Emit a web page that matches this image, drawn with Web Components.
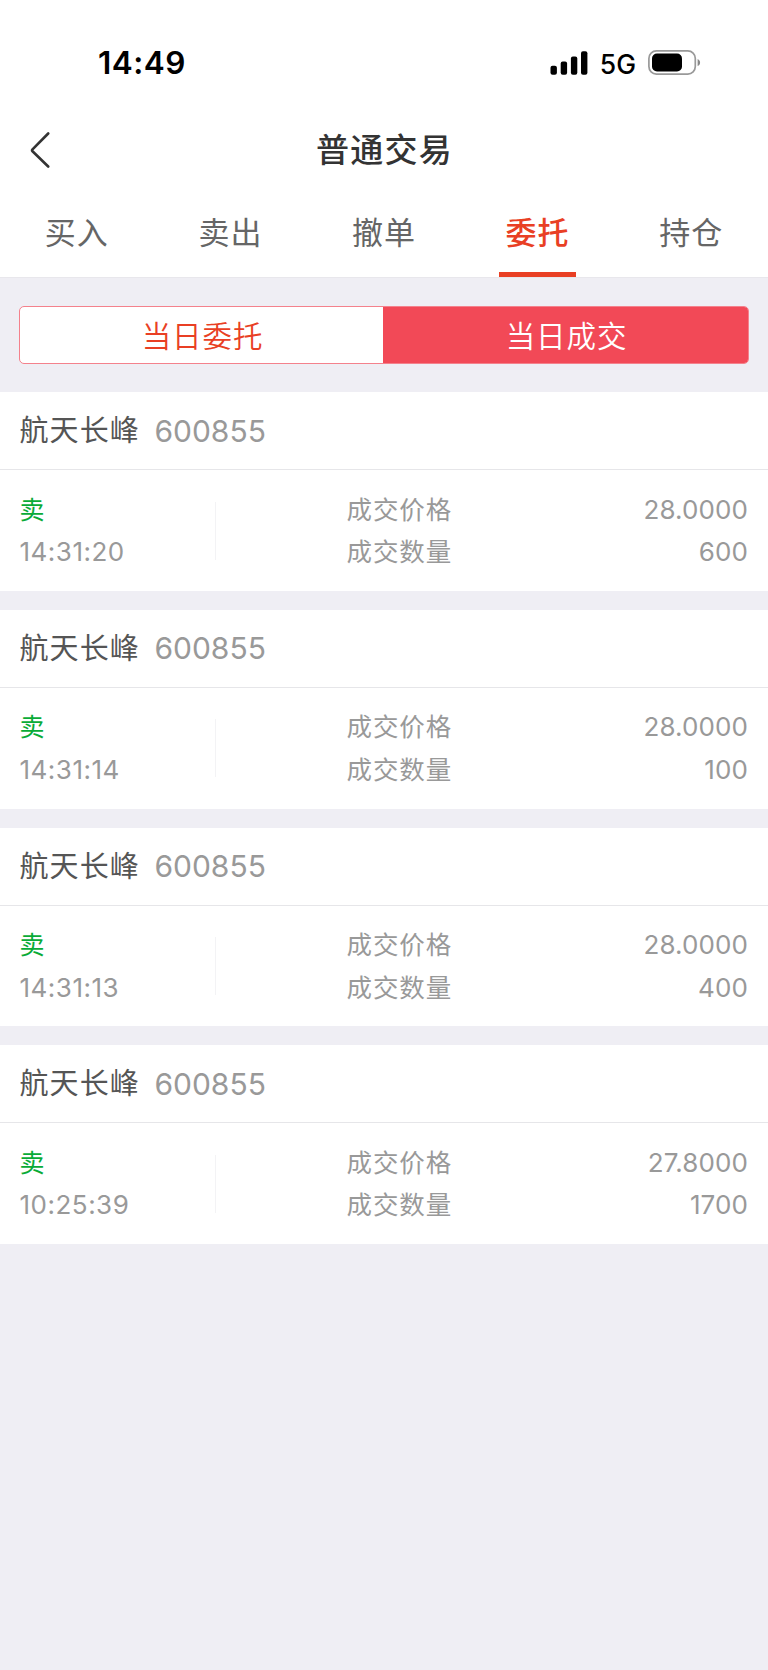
<!DOCTYPE html>
<html lang="zh-CN">
<head>
<meta charset="utf-8">
<title>普通交易</title>
<style>
html, body {
  margin: 0;
  background: #efeef4;
}
body {
  min-height: 1670px;
  font-family: Inter, "Noto Sans CJK SC", sans-serif;
  color: #333;
}
</style>
</head>
<body>
<trade-app></trade-app>
<script>
class StatusBar extends HTMLElement {
  constructor() {
    super();
    this.attachShadow({ mode: "open" }).innerHTML = `
<style>
:host {
  display: flex;
  justify-content: space-between;
  align-items: center;
  height: 106px;
  padding: 19px 67px 0 98px;
  box-sizing: border-box;
  color: #000;
}
.time {
  font-size: 31.5px;
  font-weight: 600;
  line-height: 40px;
  letter-spacing: 0.5px;
}
.right {
  display: flex;
  align-items: center;
}
.net {
  font-size: 26.5px;
  font-weight: 450;
  line-height: 32px;
  margin: 2px 12px 0 12px;
}
svg {
  display: block;
}
</style>
<span class="time"><slot></slot></span>
<div class="right">
  <svg width="38" height="24" viewBox="0 0 38 24">
    <rect x="0.5" y="14.8" width="6.4" height="9" rx="2"/>
    <rect x="10.7" y="10.6" width="6.4" height="13.2" rx="2"/>
    <rect x="20.9" y="5.6" width="6.4" height="18.2" rx="2"/>
    <rect x="31" y="0.3" width="6.4" height="23.5" rx="2"/>
  </svg>
  <span class="net">5G</span>
  <svg width="53" height="25" viewBox="0 0 53 25">
    <rect x="0.9" y="0.9" width="46.4" height="23.2" rx="7.5" fill="none" stroke="#999" stroke-width="1.7"/>
    <rect x="4" y="3.6" width="30" height="17.8" rx="5"/>
    <path d="M49.6 8.9C52.9 10.2 52.9 14.8 49.6 16.1Z" fill="#888"/>
  </svg>
</div>
    `;
  }
}

class NavBar extends HTMLElement {
  constructor() {
    super();
    this.attachShadow({ mode: "open" }).innerHTML = `
<style>
:host {
  display: grid;
  grid-template-columns: 80px 1fr 80px;
  align-items: center;
  height: 88px;
}
svg {
  display: block;
  margin-left: 30px;
}
h1 {
  margin: 0;
  text-align: center;
  font-size: 33px;
  font-weight: 500;
  line-height: 48px;
  letter-spacing: 1.2px;
  text-indent: 1px;
}
</style>
<svg width="20" height="38" viewBox="0 0 20 38" fill="none" stroke="#333" stroke-width="2.6" stroke-linecap="round" stroke-linejoin="round">
  <path d="M18.2 2.5L2.5 18.3Q1.6 19.3 2.5 20.3L18.2 35.5"/>
</svg>
<h1><slot></slot></h1>
    `;
  }
}

class TabBar extends HTMLElement {
  static get observedAttributes() {
    return ["items", "active"];
  }

  constructor() {
    super();
    this.attachShadow({ mode: "open" });
  }

  attributeChangedCallback() {
    this.render();
  }

  render() {
    const items = (this.getAttribute("items") || "").split(",");
    const active = this.getAttribute("active");
    this.shadowRoot.innerHTML = `
<style>
:host {
  display: grid;
  grid-template-columns: repeat(5, 1fr);
  height: 83px;
  border-bottom: 1px solid #e8e7ec;
}
.tab {
  display: flex;
  flex-direction: column;
  align-items: center;
  justify-content: space-between;
  font-size: 31px;
  line-height: 44px;
  letter-spacing: 1px;
  color: #666;
  padding-top: 17px;
}
.tab.active {
  color: #e93f24;
  font-weight: 500;
}
.tab.active::after {
  content: "";
  width: 77px;
  height: 5px;
  background: #e93f24;
}
</style>
${items
  .map(
    item =>
      `<div class="tab ${item === active ? "active" : ""}"><span>${item}</span></div>`
  )
  .join("")}
    `;
  }
}

class SegmentControl extends HTMLElement {
  constructor() {
    super();
    this.attachShadow({ mode: "open" }).innerHTML = `
<style>
:host {
  display: grid;
  grid-template-columns: 363px 1fr;
  height: 58px;
  margin: 28px 19px;
  border: 1px solid #f4818c;
  border-radius: 5px;
  box-sizing: border-box;
  overflow: hidden;
  background: #fff;
  font-size: 29.5px;
  font-weight: 350;
  line-height: 59px;
  letter-spacing: 0.9px;
  text-align: center;
  text-indent: 2px;
}
::slotted(span) {
  color: #e93f24;
}
::slotted(.on) {
  background: #f24957;
  color: #fff;
}
</style>
<slot></slot>
    `;
  }
}

class OrderCard extends HTMLElement {
  connectedCallback() {
    const get = name => this.getAttribute(name);
    this.attachShadow({ mode: "open" }).innerHTML = `
<style>
:host {
  display: block;
  height: 198.8px;
  background: #fff;
  color: #999;
}
.head {
  display: flex;
  align-items: center;
  height: 78px;
  padding: 0 19.5px;
  box-sizing: border-box;
  border-bottom: 1px solid #e6e6e9;
}
.name {
  font-size: 29px;
  line-height: 42px;
  margin-top: 1px;
  letter-spacing: 1.1px;
  color: #555;
}
.code {
  font-size: 30px;
  margin-left: 14.5px;
}
.body {
  display: grid;
  grid-template-columns: 195px 132px 1fr auto;
  padding: 18.5px 20px 0 19.5px;
  font-size: 26px;
  line-height: 42.5px;
}
.body > div > div {
  height: 42.5px;
}
.side {
  color: #09ab37;
  font-size: 25px;
}
.time {
  letter-spacing: 0.5px;
}
.rule {
  width: 1px;
  height: 58px;
  margin-top: 13px;
  background: #f3f3f5;
}
.label {
  font-size: 25.5px;
  letter-spacing: 0.9px;
}
.value {
  text-align: right;
  letter-spacing: 0.1px;
}
</style>
<div class="head">
  <span class="name">${get("name")}</span>
  <span class="code">${get("code")}</span>
</div>
<div class="body">
  <div>
    <div class="side">卖</div>
    <div class="time">${get("time")}</div>
  </div>
  <div class="rule"></div>
  <div class="label">
    <div>成交价格</div>
    <div>成交数量</div>
  </div>
  <div class="value">
    <div>${get("price")}</div>
    <div>${get("amount")}</div>
  </div>
</div>
    `;
  }
}

class TradeApp extends HTMLElement {
  constructor() {
    super();
    this.attachShadow({ mode: "open" }).innerHTML = `
<style>
:host {
  display: block;
}
header {
  background: #fff;
}
.list {
  display: grid;
  gap: 19px;
}
</style>
<header>
  <status-bar>14:49</status-bar>
  <nav-bar>普通交易</nav-bar>
  <tab-bar items="买入,卖出,撤单,委托,持仓" active="委托"></tab-bar>
</header>
<segment-control><span>当日委托</span><span class="on">当日成交</span></segment-control>
<div class="list">
  <order-card name="航天长峰" code="600855" time="14:31:20" price="28.0000" amount="600"></order-card>
  <order-card name="航天长峰" code="600855" time="14:31:14" price="28.0000" amount="100"></order-card>
  <order-card name="航天长峰" code="600855" time="14:31:13" price="28.0000" amount="400"></order-card>
  <order-card name="航天长峰" code="600855" time="10:25:39" price="27.8000" amount="1700"></order-card>
</div>
    `;
  }
}

customElements.define("status-bar", StatusBar);
customElements.define("nav-bar", NavBar);
customElements.define("tab-bar", TabBar);
customElements.define("segment-control", SegmentControl);
customElements.define("order-card", OrderCard);
customElements.define("trade-app", TradeApp);
</script>
</body>
</html>
